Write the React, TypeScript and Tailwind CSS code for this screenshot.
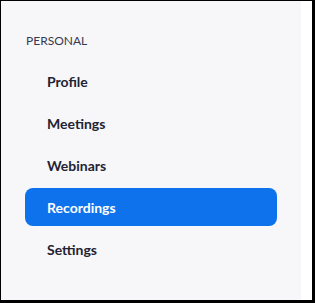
const items = ["Profile", "Meetings", "Webinars", "Recordings", "Settings"]

export default function App() {
  const active = "Recordings"

  return (
    <div className="h-[303px] w-[315px] bg-white border-t border-l border-r-[3px] border-b-[3px] border-black font-['Lato','Noto_Sans',sans-serif]">
      <div className="flex h-full w-[300px] flex-col bg-[#f7f7fa] px-6 pt-8">
        <div className="pl-px text-[12px] leading-4 text-[#39394d]">PERSONAL</div>
        <nav className="mt-[13px] flex flex-col gap-1">
          {items.map((item) => (
            <a
              key={item}
              href="#"
              className={
                item === active
                  ? "flex h-[38px] items-center rounded-lg bg-[#0e72ed] pl-[22px] text-[14px] font-bold text-white"
                  : "flex h-[38px] items-center rounded-lg pl-[22px] text-[14px] font-bold text-[#232333]"
              }
            >
              {item}
            </a>
          ))}
        </nav>
      </div>
    </div>
  )
}
